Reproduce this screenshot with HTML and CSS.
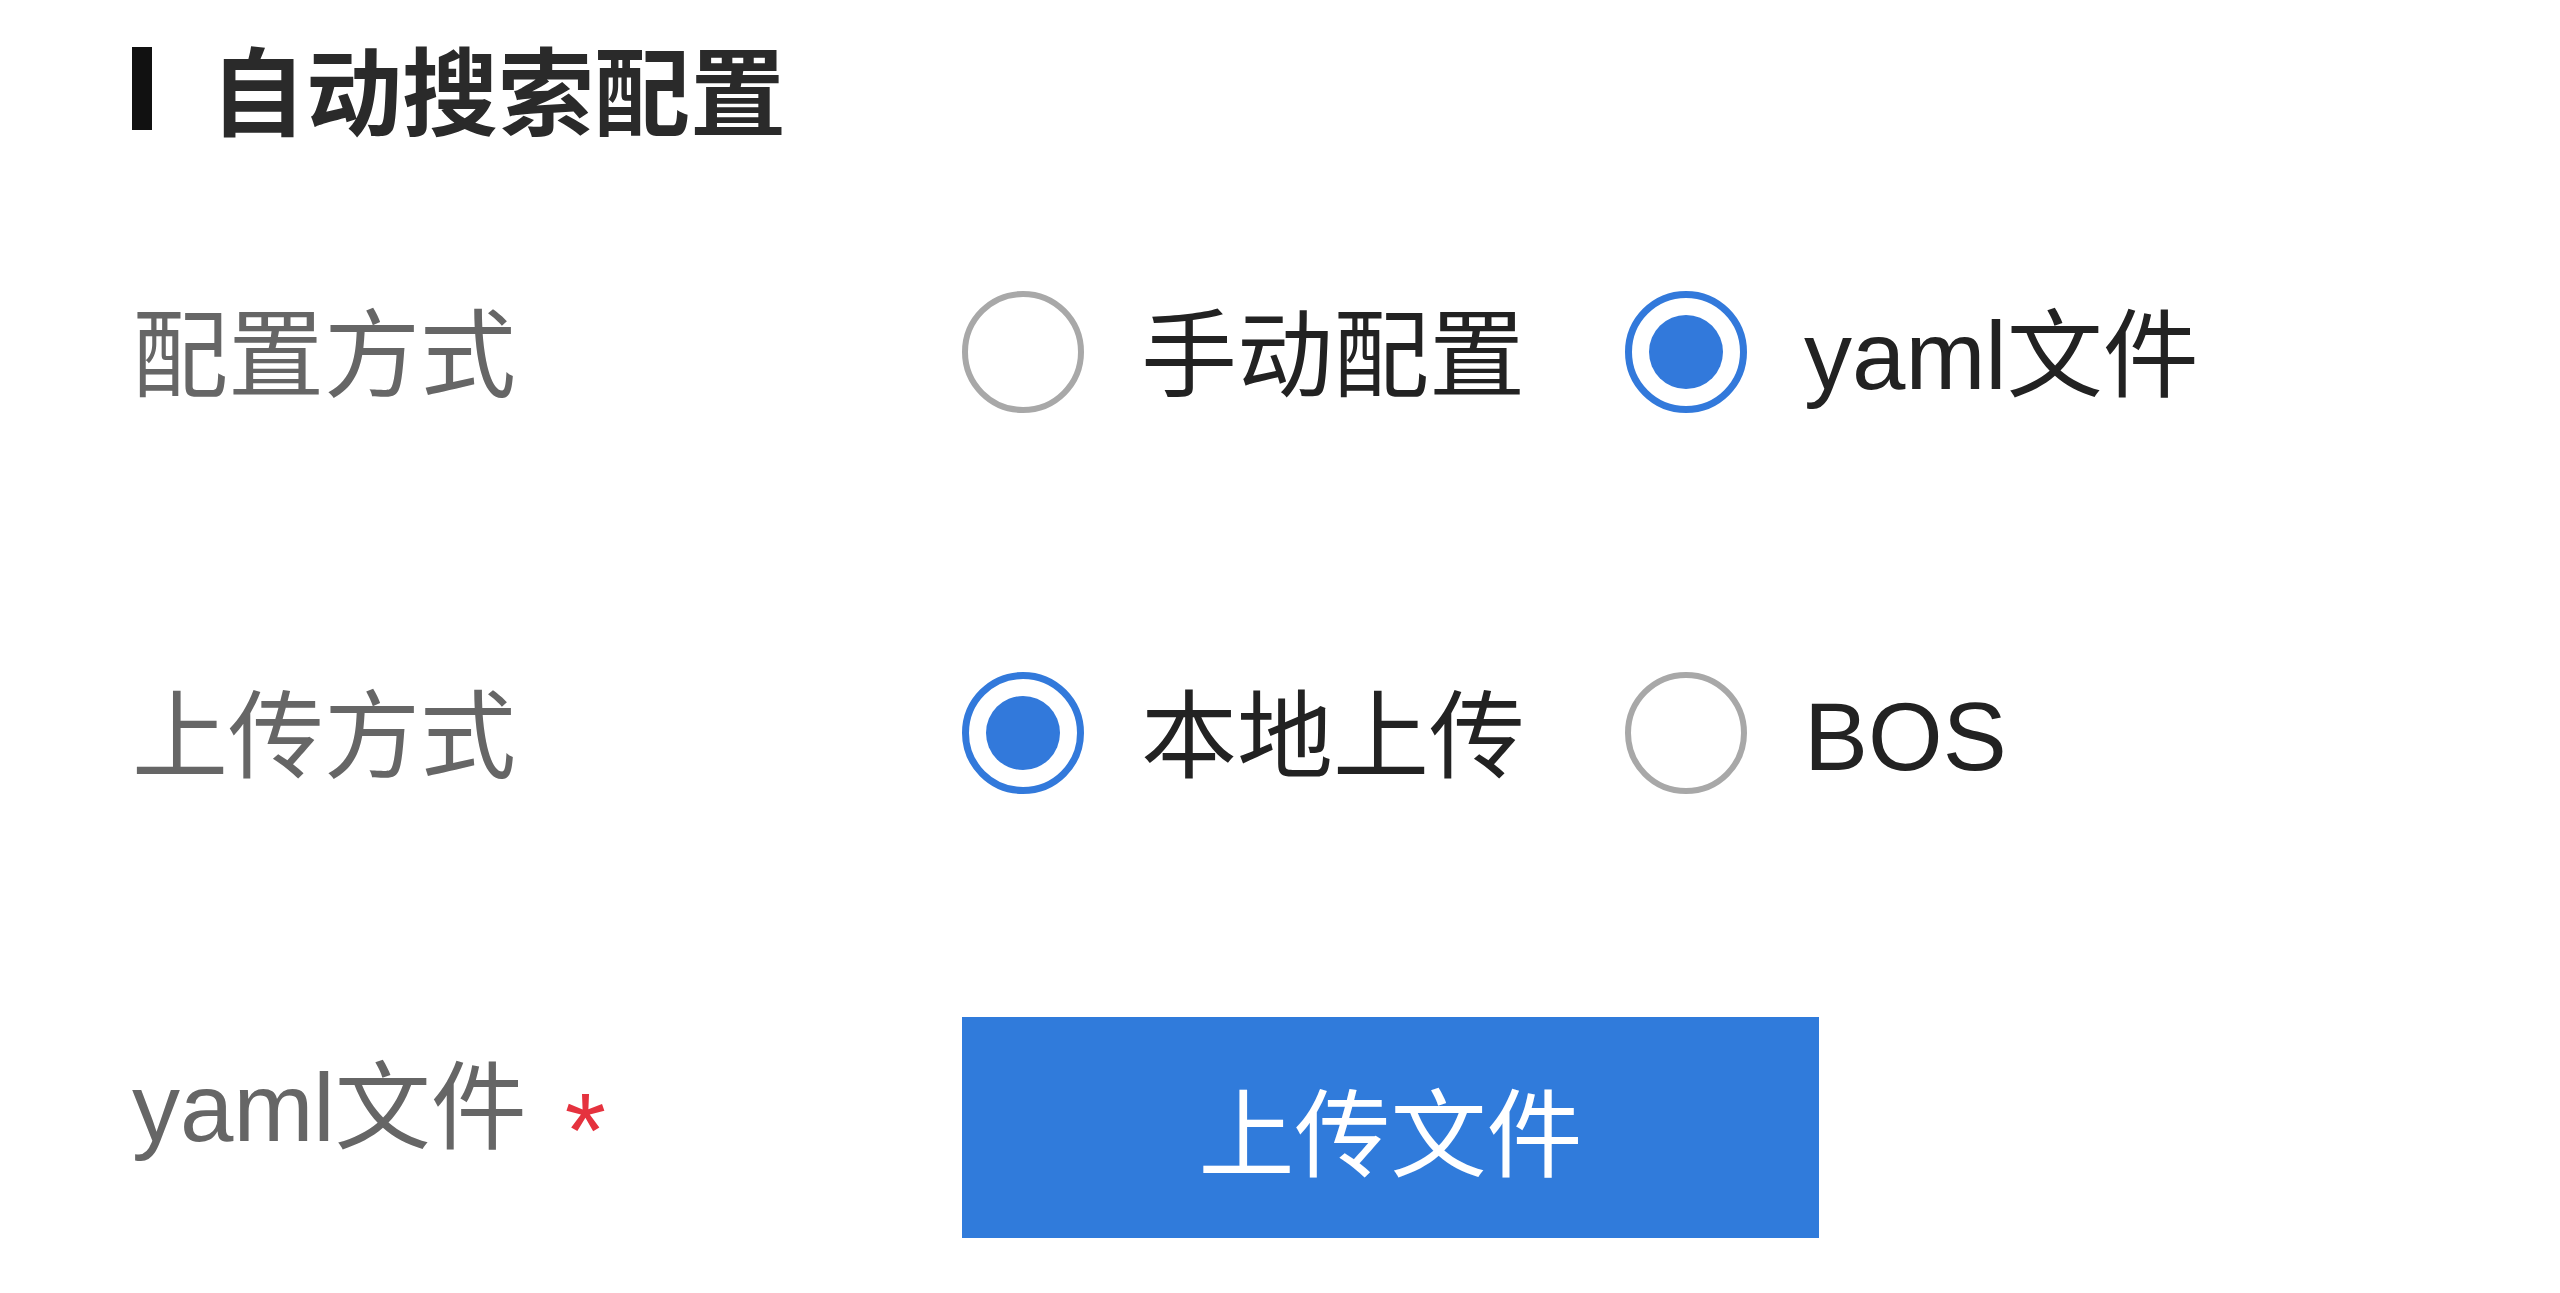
FILE: index.html
```html
<!DOCTYPE html>
<html lang="zh-CN">
<head>
<meta charset="utf-8">
<title>自动搜索配置</title>
<link rel="stylesheet" href="styles.css">
</head>
<body>
<div class="page">
  <div class="section-title">
    <span class="title-bar"></span>
    <span class="title-text">自动搜索配置</span>
  </div>

  <div class="form-row row-1">
    <div class="form-label">配置方式</div>
    <div class="form-control">
      <label class="radio-item">
        <span class="radio"></span>
        <span class="radio-text">手动配置</span>
      </label>
      <label class="radio-item">
        <span class="radio checked"></span>
        <span class="radio-text">yaml文件</span>
      </label>
    </div>
  </div>

  <div class="form-row row-2">
    <div class="form-label">上传方式</div>
    <div class="form-control">
      <label class="radio-item">
        <span class="radio checked"></span>
        <span class="radio-text">本地上传</span>
      </label>
      <label class="radio-item">
        <span class="radio"></span>
        <span class="radio-text">BOS</span>
      </label>
    </div>
  </div>

  <div class="form-row row-3">
    <div class="form-label label-required">yaml文件<span class="required">*</span></div>
    <div class="form-control">
      <button class="upload-btn" type="button">上传文件</button>
    </div>
  </div>
</div>
</body>
</html>
```

FILE: styles.css
```css
html, body {
  margin: 0;
  padding: 0;
  background: #ffffff;
}

body {
  font-family: "Liberation Sans", "Noto Sans CJK SC", sans-serif;
  font-size: 96px;
  color: #222222;
}

.page {
  padding-left: 132px;
  display: flex;
  flex-direction: column;
}

.section-title {
  height: 180px;
  display: flex;
  align-items: center;
}

.title-bar {
  width: 20px;
  height: 83px;
  background: #111111;
  margin-top: -4px;
}

.title-text {
  margin-left: 58px;
  padding-top: 10px;
  font-weight: bold;
  color: #2a2a2a;
  line-height: 1;
}

.form-row {
  display: flex;
  align-items: center;
}

.row-1 {
  height: 344px;
}

.row-2 {
  height: 418px;
}

.row-3 {
  margin-top: 75px;
  height: 221px;
}

.form-label {
  width: 830px;
  flex: none;
  color: #666666;
  line-height: 1;
  padding-top: 8px;
}

.label-required {
  padding-top: 0;
  padding-bottom: 12px;
}

.required {
  color: #e5323e;
  margin-left: 38px;
  font-size: 106px;
  vertical-align: -26px;
}

.form-control {
  display: flex;
  align-items: center;
}

.radio-item {
  display: flex;
  align-items: center;
  margin-right: 100px;
}

.radio {
  box-sizing: border-box;
  width: 122px;
  height: 122px;
  border-radius: 50%;
  border: 6px solid #a8a8a8;
  display: flex;
  align-items: center;
  justify-content: center;
  flex: none;
}

.radio.checked {
  border: 7px solid #3279db;
}

.radio.checked::after {
  content: "";
  width: 74px;
  height: 74px;
  border-radius: 50%;
  background: #3279db;
}

.radio-text {
  margin-left: 57px;
  padding-top: 8px;
  color: #222222;
  line-height: 1;
}

.upload-btn {
  box-sizing: border-box;
  width: 857px;
  height: 221px;
  border: none;
  background: #307bdb;
  color: #ffffff;
  font-family: "Liberation Sans", "Noto Sans CJK SC", sans-serif;
  font-size: 96px;
  padding: 0;
  margin: 0;
}
```
